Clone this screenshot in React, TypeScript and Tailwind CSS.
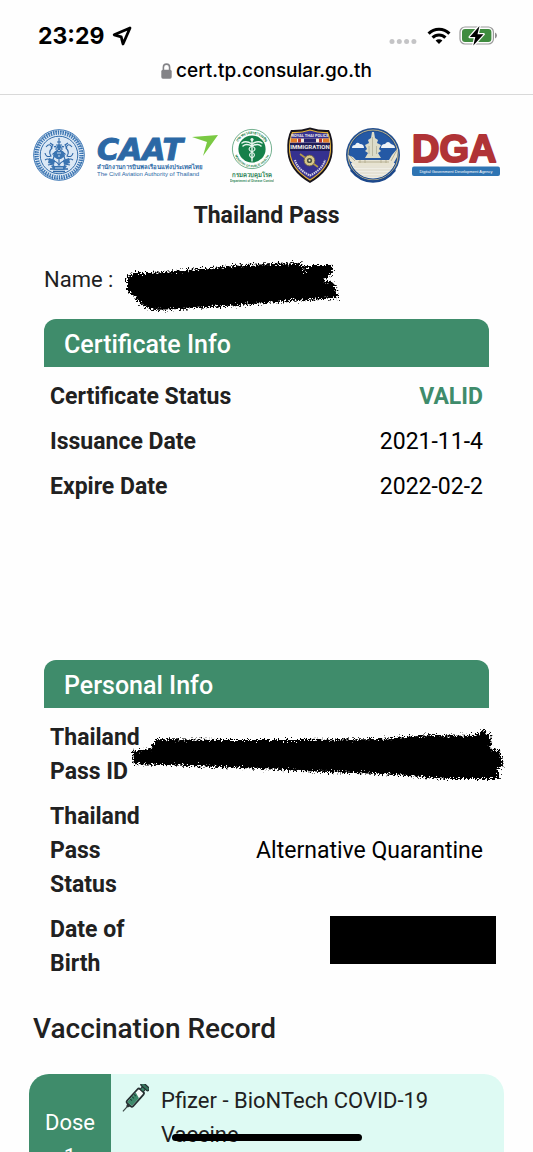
import type { ReactNode } from 'react';

/** A label / value pair shown in an info table. */
interface InfoRow {
  readonly label: string;
  readonly value: ReactNode;
}

const certificateRows: InfoRow[] = [
  { label: 'Certificate Status', value: <span className="font-bold text-[#3f8c6b]">VALID</span> },
  { label: 'Issuance Date', value: '2021-11-4' },
  { label: 'Expire Date', value: '2022-02-2' },
];

const personalRows: InfoRow[] = [
  { label: 'Thailand Pass ID', value: <PassIdRedaction /> },
  { label: 'Thailand Pass Status', value: 'Alternative Quarantine' },
  {
    label: 'Date of Birth',
    value: <span className="absolute top-2 -right-[7px] h-12 w-[166px] bg-black" />,
  },
];

/** Roughens the edges of the marker strokes. */
function BrushFilter({ id }: { id: string }) {
  return (
    <filter id={id} x="-5%" y="-20%" width="110%" height="140%">
      <feTurbulence type="fractalNoise" baseFrequency="0.6" numOctaves="3" seed="4" result="noise" />
      <feDisplacementMap in="SourceGraphic" in2="noise" scale="10" xChannelSelector="R" yChannelSelector="G" />
      <feGaussianBlur stdDeviation="0.4" />
    </filter>
  );
}

function NameRedaction() {
  return (
    <svg width="217" height="62" viewBox="125 249 217 62" className="overflow-visible" aria-hidden="true">
      <BrushFilter id="brush-name" />
      <g filter="url(#brush-name)">
        <path d="M127 277 L134 273 L150 273 L200 269 L245 265 L298 263 L303 266 L304 273 L314 265 L331 265 L333 273 L323 280 L334 283 L338 298 L290 301 L240 305 L180 309 L152 310 L144 306 L135 298 L127 290 Z" />
        <path d="M303 266 L312 276 L327 266 M135 275 L130 290" stroke="#000" strokeWidth="3" />
      </g>
    </svg>
  );
}

function PassIdRedaction() {
  return (
    <svg
      width="380"
      height="60"
      viewBox="128 724 380 60"
      className="absolute top-2.5 -right-5 overflow-visible"
      aria-hidden="true"
    >
      <BrushFilter id="brush-pass" />
      <g filter="url(#brush-pass)">
        <path d="M131 749 L150 747 L155 737 L220 738 L300 738 L380 737 L430 733 L474 734 L483 728 L487 735 L492 740 L488 746 L499 749 L502 763 L496 768 L499 777 L448 777 L380 772 L300 769 L220 765 L160 763 L133 762 Z" />
        <path d="M474 736 L485 729 M488 741 L487 732" stroke="#000" strokeWidth="4" />
      </g>
    </svg>
  );
}

function StatusBar() {
  return (
    <div className="flex items-center justify-between pr-9 pl-[38px]">
      <div className="flex items-center gap-2">
        <span className="text-[23px] leading-7 font-bold">23:29</span>
        <svg width="20" height="20" viewBox="0 0 20 20" aria-hidden="true">
          <path
            d="M18 2 L2.200 8.800 L9.200 10.800 L11 18 Z"
            fill="#fff"
            stroke="#000"
            strokeWidth="2.800"
            strokeLinejoin="round"
          />
        </svg>
      </div>
      <div className="flex items-center">
        <svg width="28" height="20" viewBox="0 0 28 20" aria-hidden="true">
          <g fill="#c4c4c6">
            <circle cx="3" cy="15.5" r="2.5" />
            <circle cx="10.3" cy="15.5" r="2.5" />
            <circle cx="17.6" cy="15.5" r="2.5" />
            <circle cx="24.9" cy="15.5" r="2.5" />
          </g>
        </svg>
        <svg width="24" height="20" viewBox="0 0 24 20" className="ml-2.5" aria-hidden="true">
          <g fill="none" stroke="#000" strokeWidth="3.1">
            <path d="M1.6 7.600 A14.6 14.6 0 0 1 22.4 7.600" />
            <path d="M5.6 11.600 A9 9 0 0 1 18.4 11.600" />
          </g>
          <path d="M12 18 L8.6 14.600 A4.8 4.8 0 0 1 15.4 14.600 Z" />
        </svg>
        <svg width="38" height="20" viewBox="0 0 38 20" className="ml-2" aria-hidden="true">
          <rect x="1" y="1" width="33.4" height="17" rx="5" fill="none" stroke="#9a9a9a" strokeWidth="1.2" />
          <rect x="3" y="3" width="29.4" height="13" rx="3" fill="#3f8c3f" />
          <path d="M36 6.600 Q38 7.600 38 9.5 Q38 11.4 36 12.4 Z" fill="#8f8f8f" />
          <path
            d="M20.5 0 L10.800 11 H16.300 L14.300 19.400 L24.500 8.200 H18.500 Z"
            stroke="#fff"
            strokeWidth="2.6"
            paintOrder="stroke"
            strokeLinejoin="round"
          />
        </svg>
      </div>
    </div>
  );
}

function AddressBar() {
  return (
    <div className="mt-[7px] flex items-center justify-center gap-1">
      <svg width="11" height="16" viewBox="0 0 11 16" aria-hidden="true">
        <path d="M2.4 8 V4.2 A3.1 3.1 0 0 1 8.6 4.2 V8" fill="none" stroke="#838387" strokeWidth="1.6" />
        <rect x="0.3" y="6.8" width="10.4" height="8.9" rx="1.6" fill="#838387" />
      </svg>
      <span className="text-[19px] leading-7 font-medium">cert.tp.consular.go.th</span>
    </div>
  );
}

function ConsularSeal() {
  return (
    <svg width="52" height="56" viewBox="0 0 52 56" role="img" aria-label="Department of Consular Affairs">
      <circle cx="26" cy="28" r="25.3" fill="#e3edf7" stroke="#3d77b5" strokeWidth="1" />
      <circle cx="26" cy="28" r="22.3" fill="none" stroke="#4079b5" strokeWidth="4" strokeDasharray="1.4 1" />
      <circle cx="26" cy="28" r="23.8" fill="none" stroke="#2f6aa9" strokeWidth="1.4" strokeDasharray="1 1.4" />
      <circle cx="26" cy="28" r="18.8" fill="#dbe8f5" stroke="#2f6aa9" strokeWidth="1" />
      <g fill="none" stroke="#2f68a8" strokeWidth="1.1">
        <path d="M26 11 V18 M24 15 H28 M23 18 H29 M26 22 L20 27 H32 Z M22 27 L19 35 M30 27 L33 35 M26 27 V37" />
        <path d="M13 20 Q17 15 19 21 Q15 25 18 29 Q13 31 12 26 M39 20 Q35 15 33 21 Q37 25 34 29 Q39 31 40 26" />
        <path d="M12 33 Q16 30 19 36 Q22 32 26 38 Q30 32 33 36 Q36 30 40 33 M15 38 Q20 36 22 41 Q26 37 30 41 Q32 36 37 38" />
        <path d="M17 16 L20 18 L18 21 M35 16 L32 18 L34 21 M21 20 Q24 18 23 23 M31 20 Q28 18 29 23" />
        <path d="M17 42 H35 M20 44.5 H32" strokeWidth="1.6" />
      </g>
      <g fill="#3a74b1">
        <circle cx="26" cy="20" r="2.2" />
        <path d="M22 24 H30 L32 29 L28 32 H24 L20 29 Z" />
        <path d="M16 31 L22 33 L21 38 L15 36 Z M36 31 L30 33 L31 38 L37 36 Z" />
        <path d="M18 39 H34 L31 43 H21 Z" />
      </g>
      <path d="M24 26 H28 M25 29 H27 M22 41 H30" stroke="#dbe8f5" strokeWidth="0.9" />
    </svg>
  );
}

function CaatLogo() {
  return (
    <svg width="121" height="56" viewBox="97 127 121 56" role="img" aria-label="CAAT">
      <text
        x="97"
        y="160"
        fontFamily="'DejaVu Sans', sans-serif"
        fontSize="30"
        fontWeight="700"
        fontStyle="italic"
        fill="#2b68a5"
        stroke="#2b68a5"
        strokeWidth="1"
      >
        CAAT
      </text>
      <path d="M192 137 L218 135 L203 156 L207 142 Z" fill="#7ac943" />
      <text x="97" y="169" fontFamily="'Noto Sans', sans-serif" fontSize="6" fontWeight="700" fill="#2b68a5">
        สำนักงานการบินพลเรือนแห่งประเทศไทย
      </text>
      <text x="97" y="176" fontFamily="'Liberation Sans', sans-serif" fontSize="6" fill="#2b68a5">
        The Civil Aviation Authority of Thailand
      </text>
    </svg>
  );
}

function DiseaseControlLogo() {
  return (
    <svg width="44" height="56" viewBox="231 127 44 56" role="img" aria-label="Department of Disease Control">
      <circle cx="253" cy="149" r="19.6" fill="#fff" stroke="#4f9c72" strokeWidth="0.8" />
      <path id="moph-top" d="M237.6 149 A15.4 15.4 0 0 1 268.4 149" fill="none" />
      <path id="moph-bottom" d="M234.8 149 A18.2 18.2 0 0 0 271.2 149" fill="none" />
      <g fontFamily="'Noto Sans', sans-serif" fontWeight="700" fill="#1d7f4c">
        <text fontSize="4">
          <textPath href="#moph-top" startOffset="50%" textAnchor="middle">
            กระทรวงสาธารณสุข
          </textPath>
        </text>
        <text fontSize="3">
          <textPath href="#moph-bottom" startOffset="50%" textAnchor="middle">
            MINISTRY OF PUBLIC HEALTH
          </textPath>
        </text>
      </g>
      <circle cx="253" cy="149" r="13.6" fill="#16804a" />
      <g fill="none" stroke="#e8f5ee" strokeLinecap="round">
        <path d="M253 139 V161" strokeWidth="1.4" />
        <path d="M253 144 Q247 140 243 143 M253 146 Q247 143 244 146 M253 144 Q259 140 263 143 M253 146 Q259 143 262 146" strokeWidth="1.5" />
        <path d="M253 146 Q247 149 253 152 Q258 155 253 158 M253 146 Q259 149 253 152 Q248 155 253 158" strokeWidth="1.1" />
      </g>
      <circle cx="253" cy="139.5" r="1.6" fill="#e8f5ee" />
      <text x="253" y="177" textAnchor="middle" fontFamily="'Noto Sans', sans-serif" fontSize="6" fontWeight="700" fill="#2c8355">
        กรมควบคุมโรค
      </text>
      <text x="253" y="182" textAnchor="middle" fontFamily="'Liberation Sans', sans-serif" fontSize="3" fontWeight="700" fill="#2c8355">
        Department of Disease Control
      </text>
    </svg>
  );
}

function ImmigrationBadge() {
  return (
    <svg width="48" height="56" viewBox="286 127 48 56" role="img" aria-label="Royal Thai Police Immigration">
      <path d="M310 127.5 Q320 130.5 329 130 Q333.5 138 332.6 152 Q331 171 310 183 Q289 171 287.400 152 Q286.500 138 291 130 Q300 130.500 310 127.500 Z" fill="#17141c" />
      <path d="M310 130 Q319 133 327.500 132.500 Q331 140 330.300 152 Q328.600 169 310 180 Q291.400 169 289.700 152 Q289 140 292.500 132.500 Q301 133 310 130 Z" fill="#35318f" stroke="#e5b437" strokeWidth="1.2" />
      <path d="M290.500 138.500 H329.500 L330 142.500 H290 Z" fill="#f3e9d8" />
      <path d="M291 138.500 H297 V142.500 H290.500 Z M323 138.500 H329 L329.500 142.500 H323 Z" fill="#e07b28" />
      <path d="M304 138.500 H316 V142.500 H304 Z" fill="#29246f" />
      <path d="M290 143 H330 V151 H290 Z" fill="#1f1c55" />
      <path d="M298 138.500 H301 V142.500 H298 Z M319 138.500 H322 V142.500 H319 Z" fill="#b4332f" />
      <g textAnchor="middle" fontFamily="Roboto, sans-serif" fontWeight="700" fill="#f0eee9">
        <text x="310" y="137" fontSize="4">
          ROYAL THAI POLICE
        </text>
        <text x="310" y="149" fontSize="6">
          IMMIGRATION
        </text>
      </g>
      <path d="M300 154 L318 167" stroke="#b59b4b" strokeWidth="1.6" />
      <circle cx="309.500" cy="160.500" r="5.400" fill="#d6c78b" stroke="#6d6138" strokeWidth="0.8" />
      <circle cx="309.500" cy="160.500" r="2.600" fill="#4c5244" />
      <circle cx="309.500" cy="160.500" r="1" fill="#efe8c4" />
      <path d="M295 160 Q297 169 310 175.500 Q323 169 325 160" fill="none" stroke="#d3d0e6" strokeWidth="2" strokeDasharray="1.500 0.700" />
    </svg>
  );
}

function MaritimeSeal() {
  return (
    <svg width="54" height="56" viewBox="345 127 54 56" role="img" aria-label="Royal barge seal">
      <clipPath id="barge-clip">
        <circle cx="372" cy="155" r="23.5" />
      </clipPath>
      <circle cx="372" cy="155" r="27" fill="#234f8f" />
      <circle cx="372" cy="155" r="25" fill="none" stroke="#c9bb8a" strokeWidth="0.9" />
      <g clipPath="url(#barge-clip)">
        <path d="M345 127 H399 V183 H345 Z" fill="#2459a5" />
        <path d="M345 163 H399 V171 Q372 184 345 171 Z" fill="#ece9dd" />
        <path d="M350 164 Q361 181 372 179 Q383 181 394 164 Z" fill="#efede4" />
        <path d="M352 167 H392 M354 170 H390 M357 173 H387 M361 176 H383" stroke="#d8d2bd" strokeWidth="0.800" />
      </g>
      <g fill="#eef2f7">
        <path d="M351 148 Q351 145 354 145 Q356 141 359 144 Q363 144 363 148 Z" />
        <path d="M380 148 Q380 144 384 144 Q387 140 390 144 Q394 145 394 148 Z" />
      </g>
      <path d="M371 132 L373 132 L374 138 L377 140 L376 143 L380 145 L378 149 L380 151 L377 153 L380 158 H364 L367 153 L364 151 L366 149 L364 145 L368 143 L367 140 L370 138 Z" fill="#dcdcc9" />
      <path d="M371.500 137 V156 M368 146 V154 M375.500 146 V154" stroke="#aaa88f" strokeWidth="0.700" />
      <path d="M347 155 L352 157 L355 160 H388 L391 155 L397 148 L396 157 L391 166 H355 L349 161 Z" fill="#e7e3d2" />
      <path d="M349 156 L354 161 M396 150 L390 161 M357 162 H388 M359 160 V163 M364 160 V163 M380 160 V163 M385 160 V163" stroke="#b3ad8e" strokeWidth="0.900" />
      <path d="M350 170 Q359 181.500 372 181.500 Q385 181.500 394 170" fill="none" stroke="#1c488b" strokeWidth="2.600" />
    </svg>
  );
}

function DgaLogo() {
  return (
    <svg width="88" height="56" viewBox="412 127 88 56" role="img" aria-label="DGA">
      <text
        x="412"
        y="162"
        fontFamily="'Liberation Sans', sans-serif"
        fontSize="38"
        fontWeight="700"
        fill="#b03336"
        stroke="#b03336"
        strokeWidth="2"
        strokeLinejoin="round"
      >
        DGA
      </text>
      <rect x="412" y="166.500" width="88" height="9.500" rx="2" fill="#2e74b3" />
      <text x="456" y="173" textAnchor="middle" fontFamily="'Liberation Sans', sans-serif" fontSize="4" fill="#fff">
        Digital Government Development Agency
      </text>
    </svg>
  );
}

function SyringeIcon() {
  return (
    <svg width="28" height="28" viewBox="0 0 28 28" className="shrink-0" aria-hidden="true">
      <g transform="rotate(42 14 14)">
        <path d="M14 24 V32" stroke="#3c4a48" strokeWidth="1.200" />
        <path d="M11.500 22.500 H16.500 L15 26 H13 Z" fill="#2b3335" />
        <rect x="10" y="4" width="8" height="19" rx="1.800" fill="#f4fbf8" stroke="#263032" strokeWidth="1.800" />
        <path d="M10.900 9.500 L17.100 11.500 V22.100 H10.900 Z" fill="#3c8a6b" />
        <path d="M10.900 12 H13.500 M10.900 15 H13.500 M10.900 18 H13.500" stroke="#1f3d36" strokeWidth="1" />
        <rect x="12" y="-1" width="4" height="5" fill="#3c8a6b" stroke="#263032" strokeWidth="1" />
        <rect x="9" y="-3" width="10" height="3.600" rx="1.500" fill="#35735c" stroke="#263032" strokeWidth="1.200" />
      </g>
    </svg>
  );
}

/** Table block with a green title bar on top. */
function InfoSection({ title, rows, narrow = false }: { title: string; rows: InfoRow[]; narrow?: boolean }) {
  return (
    <section>
      <h2 className="rounded-t-xl bg-[#3f8c6b] px-5 pt-2 pb-1 text-[25px] leading-9 font-medium text-white">{title}</h2>
      <table className="mt-2 w-full text-[23px] leading-[34px]">
        <tbody>
          {rows.map((row) => (
            <tr key={row.label}>
              <th
                scope="row"
                className={`px-1.5 pt-[5px] pb-1.5 text-left align-top font-bold text-[#212121] ${narrow ? 'w-28' : ''}`}
              >
                {row.label}
              </th>
              <td className="relative px-1.5 pt-[5px] pb-1.5 text-right text-black">{row.value}</td>
            </tr>
          ))}
        </tbody>
      </table>
    </section>
  );
}

export default function App() {
  return (
    <div className="relative h-screen overflow-hidden bg-[#fefefe] font-['Roboto',sans-serif] text-[#212121]">
      <header className="border-b border-[#d9d9d9] pt-[22px] pb-[9px] font-['Inter',sans-serif] text-black">
        <StatusBar />
        <AddressBar />
      </header>

      <main>
        <div className="mt-8 flex items-center justify-center gap-3">
          <ConsularSeal />
          <CaatLogo />
          <DiseaseControlLogo />
          <ImmigrationBadge />
          <MaritimeSeal />
          <DgaLogo />
        </div>
        <h1 className="mt-4 text-center text-[23px] leading-[34px] font-bold">Thailand Pass</h1>

        <div className="px-11">
          <div className="mt-4 mb-2 flex items-center gap-3 text-[22px] leading-[34px]">
            <span>Name :</span>
            <NameRedaction />
          </div>
          <InfoSection title="Certificate Info" rows={certificateRows} />
          <div className="mt-[150px]">
            <InfoSection title="Personal Info" rows={personalRows} narrow />
          </div>
        </div>

        <h2 className="mt-[22px] px-[33px] text-[28px] leading-10 font-medium">Vaccination Record</h2>
        <article className="mx-[29px] mt-[25px] flex overflow-hidden rounded-[20px] bg-[#defaf3] text-[22px] leading-[34px]">
          <div className="flex w-[82px] items-center justify-center bg-[#3f8c6b] px-4 py-8 text-center text-white">
            Dose 1
          </div>
          <div className="flex flex-1 items-start gap-3 px-2.5 pt-2.5">
            <SyringeIcon />
            <p>
              Pfizer - BioNTech COVID-19
              <br />
              Vaccine
            </p>
          </div>
        </article>
      </main>

      {/* Home indicator */}
      <div className="absolute bottom-[11px] left-1/2 h-[7px] w-[190px] -translate-x-1/2 rounded-full bg-black" />
    </div>
  );
}
